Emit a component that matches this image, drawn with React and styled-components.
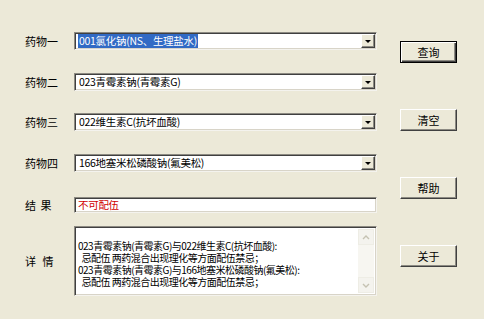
import styled, { createGlobalStyle, css } from "styled-components"

const Global = createGlobalStyle`
    html, body {
        margin: 0;
        padding: 0;
        background: #ECE9D8;
    }
    body {
        font-family: "Noto Sans CJK SC", "Liberation Sans", sans-serif;
        color: #000;
    }
`

const Janela = styled.div`
    width: 484px;
    height: 319px;
    display: flex;
    padding-left: 25px;
    box-sizing: border-box;
    background: #ECE9D8;
`

const Formulario = styled.div`
    width: 352px;
    padding-top: 32px;
    display: flex;
    flex-direction: column;
`

const Linha = styled.div`
    display: flex;
    align-items: center;
    margin-top: ${p => p.$topo || 0}px;
`

const Rotulo = styled.div`
    width: 49px;
    flex: none;
    font-size: 11px;
    line-height: 14px;
    white-space: pre;
    letter-spacing: ${p => p.$espaco || 0}px;
`

const afundado = css`
    box-sizing: border-box;
    background: #fff;
    border: 1px solid;
    border-color: #8c8a82 #f4f3ee #f4f3ee #8c8a82;
    box-shadow: inset 1px 1px 0 #404040, inset -1px -1px 0 #d8d4c8;
`

const Combo = styled.div`
    ${afundado}
    width: 303px;
    height: 18px;
    display: flex;
    align-items: center;
    padding: 2px 1px 2px 2px;
`

const TextoCombo = styled.div`
    flex: 1;
    font-size: 10.5px;
    letter-spacing: -0.3px;
    line-height: 14px;
    padding-left: 1px;
    white-space: nowrap;
    overflow: hidden;
`

const Selecionado = styled.span`
    background: ${p => p.$ativo ? "#316AC5" : "transparent"};
    color: ${p => p.$ativo ? "#fff" : "#000"};
    padding: 0 1px;
`

const BotaoSeta = styled.div`
    width: 14px;
    height: 14px;
    box-sizing: border-box;
    background: #ECE9D8;
    border: 1px solid;
    border-color: #fff #404040 #404040 #fff;
    box-shadow: inset -1px -1px 0 #8c8a82;
    display: flex;
    align-items: center;
    justify-content: center;
`

const Seta = styled.div`
    width: 0;
    height: 0;
    border-left: 3px solid transparent;
    border-right: 3px solid transparent;
    border-top: 3px solid #000;
`

const CaixaResultado = styled.div`
    ${afundado}
    width: 303px;
    height: 16px;
    padding: 0 3px;
    font-size: 10.5px;
    letter-spacing: -0.3px;
    line-height: 14px;
    color: #d00000;
`

const CaixaDetalhe = styled.div`
    ${afundado}
    width: 303px;
    height: 70px;
    display: flex;
    padding: 2px;
`

const TextoDetalhe = styled.div`
    flex: 1;
    padding: 11px 0 0 1px;
    font-size: 10px;
    letter-spacing: -0.5px;
    line-height: 12px;
    white-space: pre;
    overflow: hidden;
`

const Rolagem = styled.div`
    width: 16px;
    flex: none;
    background: #F7F6F1;
    display: flex;
    flex-direction: column;
    justify-content: space-between;
`

const BotaoRolagem = styled.div`
    height: 16px;
    background: #F4F3EE;
    border: 1px solid #EEEDE5;
    box-sizing: border-box;
    display: flex;
    align-items: center;
    justify-content: center;
`

const Botoes = styled.div`
    margin-left: 23px;
    padding-top: 41px;
    display: flex;
    flex-direction: column;
    gap: 46px;
`

const Botao = styled.div`
    width: 57px;
    height: 22px;
    box-sizing: border-box;
    background: #ECE9D8;
    border: 1px solid;
    border-color: ${p => p.$padrao ? "#000" : "#fff #404040 #404040 #fff"};
    box-shadow: ${p => p.$padrao
        ? "inset 1px 1px 0 #fff, inset -1px -1px 0 #404040, inset -2px -2px 0 #8c8a82"
        : "inset -1px -1px 0 #8c8a82"};
    display: flex;
    align-items: center;
    justify-content: center;
    font-size: 11px;
`

const Chevron = ({ baixo }) => (
    <svg width="8" height="5" viewBox="0 0 8 5">
        <path d={baixo ? "M1 1 L4 4 L7 1" : "M1 4 L4 1 L7 4"} fill="none" stroke="#C5C2B2" strokeWidth="1.4" />
    </svg>
)

const medicamentos = [
    { rotulo: "药物一", valor: "001氯化钠(NS、生理盐水)", topo: 0, ativo: true },
    { rotulo: "药物二", valor: "023青霉素钠(青霉素G)", topo: 23 },
    { rotulo: "药物三", valor: "022维生素C(抗坏血酸)", topo: 22 },
    { rotulo: "药物四", valor: "166地塞米松磷酸钠(氟美松)", topo: 23 },
]

const detalhe = [
    "023青霉素钠(青霉素G)与022维生素C(抗坏血酸):",
    "  忌配伍 两药混合出现理化等方面配伍禁忌；",
    "023青霉素钠(青霉素G)与166地塞米松磷酸钠(氟美松):",
    "  忌配伍 两药混合出现理化等方面配伍禁忌；",
].join("\n")

const App = () => {
    return (
        <Janela>
            <Global />
            <Formulario>
                {medicamentos.map(m => (
                    <Linha key={m.rotulo} $topo={m.topo}>
                        <Rotulo>{m.rotulo}</Rotulo>
                        <Combo>
                            <TextoCombo>
                                <Selecionado $ativo={m.ativo}>{m.valor}</Selecionado>
                            </TextoCombo>
                            <BotaoSeta><Seta /></BotaoSeta>
                        </Combo>
                    </Linha>
                ))}
                <Linha $topo={25}>
                    <Rotulo $espaco={1}>{"结 果"}</Rotulo>
                    <CaixaResultado>不可配伍</CaixaResultado>
                </Linha>
                <Linha $topo={13}>
                    <Rotulo $espaco={2}>{"详 情"}</Rotulo>
                    <CaixaDetalhe>
                        <TextoDetalhe>{detalhe}</TextoDetalhe>
                        <Rolagem>
                            <BotaoRolagem><Chevron /></BotaoRolagem>
                            <BotaoRolagem><Chevron baixo /></BotaoRolagem>
                        </Rolagem>
                    </CaixaDetalhe>
                </Linha>
            </Formulario>
            <Botoes>
                <Botao $padrao>查询</Botao>
                <Botao>清空</Botao>
                <Botao>帮助</Botao>
                <Botao>关于</Botao>
            </Botoes>
        </Janela>
    )
}

export default App
